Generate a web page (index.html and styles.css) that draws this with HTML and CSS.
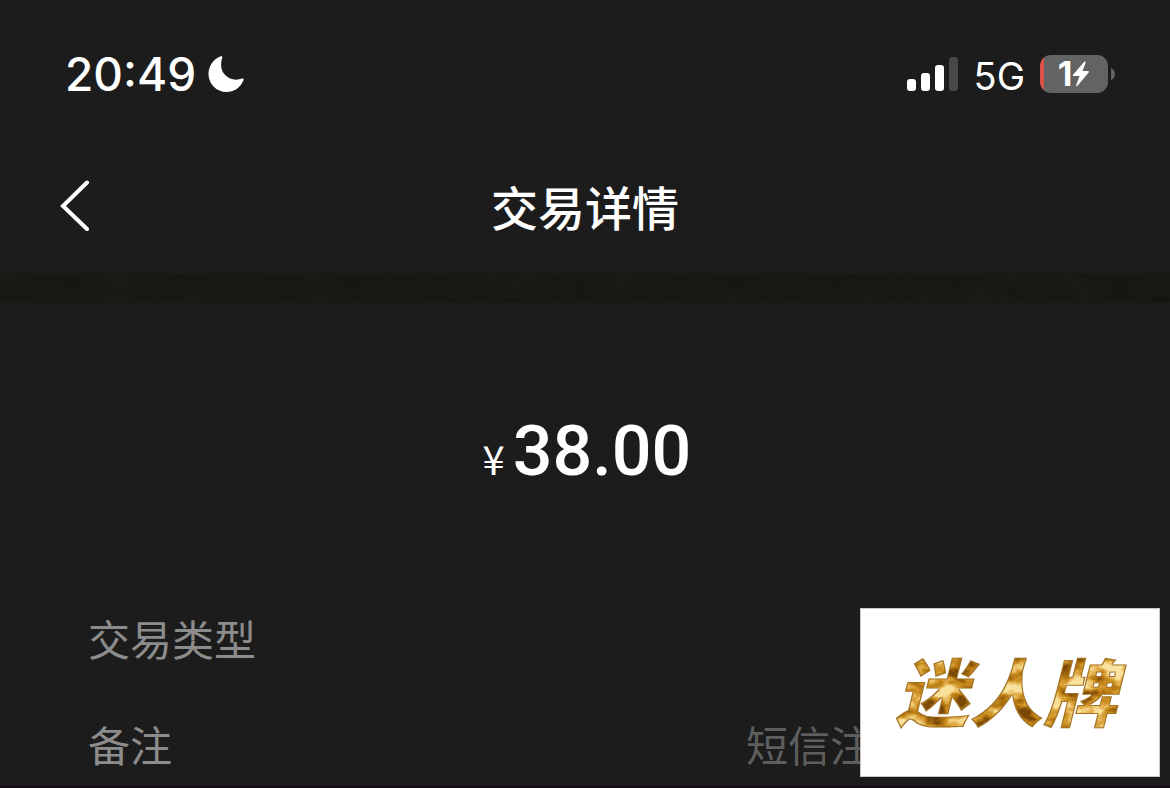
FILE: index.html
```html
<!DOCTYPE html>
<html lang="zh-CN">
<head>
<meta charset="utf-8">
<meta name="viewport" content="width=device-width, initial-scale=1">
<title>交易详情</title>
<link rel="stylesheet" href="styles.css">
</head>
<body>
<div class="status">
  <div class="clock">
    <time>20:49</time>
    <svg class="moon" viewBox="0 0 36 36" aria-hidden="true"><path d="M12.600.3C13.600-.1 14.600.6 14.300 1.500C12.300 7 12.600 14 16.500 18.300C20.500 23.300 27.500 25 34 22.600C35.200 22.200 36 23 35.500 24.200C32.500 31.500 26 36 18.500 36C8.500 36 .5 28 .5 18C.5 10 5.500 3 12.600.3Z"/></svg>
  </div>
  <div class="indicators">
    <svg class="signal" viewBox="0 0 52 34" aria-hidden="true"><rect x="0" y="22" width="9" height="12" rx="3"/><rect x="14" y="16" width="9" height="18" rx="3"/><rect x="28" y="8" width="9" height="26" rx="3"/><rect class="weak" x="42" y="0" width="9" height="34" rx="3"/></svg>
    <span class="network">5G</span>
    <span class="battery">
      <span class="cell"><span class="level">1</span><svg class="bolt" viewBox="0 0 18 26" aria-hidden="true"><path d="M12.500.6 1 13.700Q.3 15 1.600 15H7.500L4.200 24.300Q4 25.800 5.300 25L16.700 11.500Q17.500 10 16 10H10.500L13.700 1.500Q13.700.2 12.500.6Z"/></svg></span>
      <svg class="tip" viewBox="0 0 4 12" aria-hidden="true"><path d="M0 0Q4 2 4 6T0 12Z"/></svg>
    </span>
  </div>
</div>
<header class="bar">
  <button class="back" type="button" aria-label="返回"><svg viewBox="0 0 30 52" aria-hidden="true"><path d="M27 2.500 3 26 27 49"/></svg></button>
  <h1>交易详情</h1>
</header>
<svg class="divider" aria-hidden="true">
  <filter id="grain" x="0" y="0" width="100%" height="100%"><feTurbulence type="fractalNoise" baseFrequency=".03 .06" numOctaves="3" seed="4"/><feColorMatrix values=".03 0 0 0 .066  .035 0 0 0 .075  .025 0 0 0 .053  0 0 0 0 1" color-interpolation-filters="sRGB"/></filter>
  <rect width="100%" height="100%" filter="url(#grain)"/>
</svg>
<main>
  <p class="amount"><span class="currency">¥</span><span>38.00</span></p>
  <dl class="details">
    <div class="row"><dt>交易类型</dt></div>
    <div class="row"><dt>备注</dt><dd>短信注</dd></div>
  </dl>
</main>
<div class="brand"><span>迷人牌</span></div>
<svg class="defs" aria-hidden="true">
  <filter id="gold" x="-5%" y="-5%" width="110%" height="110%" color-interpolation-filters="sRGB">
    <feTurbulence type="fractalNoise" baseFrequency=".035 .055" numOctaves="4" seed="8"/>
    <feColorMatrix values="2.600 0 0 0 -.78  2.600 0 0 0 -.78  2.600 0 0 0 -.78  0 0 0 0 1"/>
    <feComponentTransfer result="metal">
      <feFuncR type="table" tableValues=".48 .68 .80 .91 .98"/>
      <feFuncG type="table" tableValues=".29 .44 .56 .72 .89"/>
      <feFuncB type="table" tableValues=".04 .06 .13 .35 .62"/>
    </feComponentTransfer>
    <feMorphology in="SourceAlpha" operator="erode" radius="1" result="inner"/>
    <feComposite in="metal" in2="inner" operator="in" result="face"/>
    <feFlood flood-color="#a37424"/>
    <feComposite in2="SourceAlpha" operator="in" result="edge"/>
    <feMerge><feMergeNode in="edge"/><feMergeNode in="face"/></feMerge>
  </filter>
</svg>
</body>
</html>
```
FILE: styles.css
```css
* { box-sizing: border-box; }
body {
  margin: 0;
  min-height: 100vh;
  display: flex;
  flex-direction: column;
  position: relative;
  background: #1c1c1c;
  border-bottom: 2px solid #140f14;
  color: #fff;
  font-family: Inter, "Noto Sans CJK SC", sans-serif;
}
h1, p, dl, dd { margin: 0; }
svg { display: block; }
.status {
  display: flex;
  justify-content: space-between;
  align-items: center;
  height: 148px;
  padding: 0 55px 0 65px;
}
.clock, .indicators, .battery, .cell { display: flex; align-items: center; }
.clock { gap: 12px; font-size: 46px; font-weight: 500; line-height: 56px; }
.moon { width: 36px; height: 36px; fill: #fff; }
.indicators { gap: 15px; }
.signal { width: 52px; height: 34px; fill: #fff; }
.signal .weak { fill: #484848; }
.network { font-size: 38px; font-weight: 400; line-height: 44px; padding-top: 4px; }
.battery { gap: 3px; }
.cell {
  justify-content: center;
  width: 68px;
  height: 38px;
  border-radius: 11px;
  background: linear-gradient(90deg, #d9534b 4px, #636363 4px);
}
.level { font-size: 34px; font-weight: 700; line-height: 38px; }
.bolt { width: 18px; height: 26px; fill: #fff; }
.tip { width: 4px; height: 12px; fill: #636363; }
.bar {
  display: grid;
  grid-template-columns: 1fr auto 1fr;
  align-items: center;
  height: 125px;
  padding: 0 60px 4px;
}
.back {
  justify-self: start;
  padding: 0;
  margin-bottom: 6px;
  border: 0;
  background: none;
}
.back svg { width: 30px; height: 52px; fill: none; stroke: #fff; stroke-width: 4; stroke-linecap: round; }
h1 { font-size: 47px; font-weight: 500; line-height: 64px; }
.divider { width: 100%; height: 30px; }
.amount {
  display: flex;
  justify-content: center;
  align-items: baseline;
  gap: 8px;
  padding: 106px 0 116px 4px;
  font-family: Roboto, sans-serif;
  font-size: 70px;
  font-weight: 500;
  line-height: 84px;
}
.currency { font-family: "Noto Sans CJK SC", sans-serif; font-size: 40px; font-weight: 400; line-height: 64px; }
.details { padding: 0 88px; font-size: 42px; line-height: 64px; }
.row { display: flex; justify-content: space-between; margin-bottom: 42px; color: #8c8c8c; }
.row:last-child { margin-bottom: 0; }
dd { width: 8em; color: #5e5e5e; }
.brand {
  position: absolute;
  right: 10px;
  bottom: 9px;
  display: flex;
  justify-content: center;
  align-items: center;
  width: 300px;
  height: 169px;
  padding: 0 8px 8px 0;
  border: 1px solid #c8c8c8;
  background: #fff;
}
.brand span {
  font-family: "Noto Sans CJK SC", sans-serif;
  font-size: 74px;
  font-weight: 900;
  font-style: italic;
  line-height: 88px;
  filter: url(#gold);
}
.defs { position: absolute; width: 0; height: 0; }
```
